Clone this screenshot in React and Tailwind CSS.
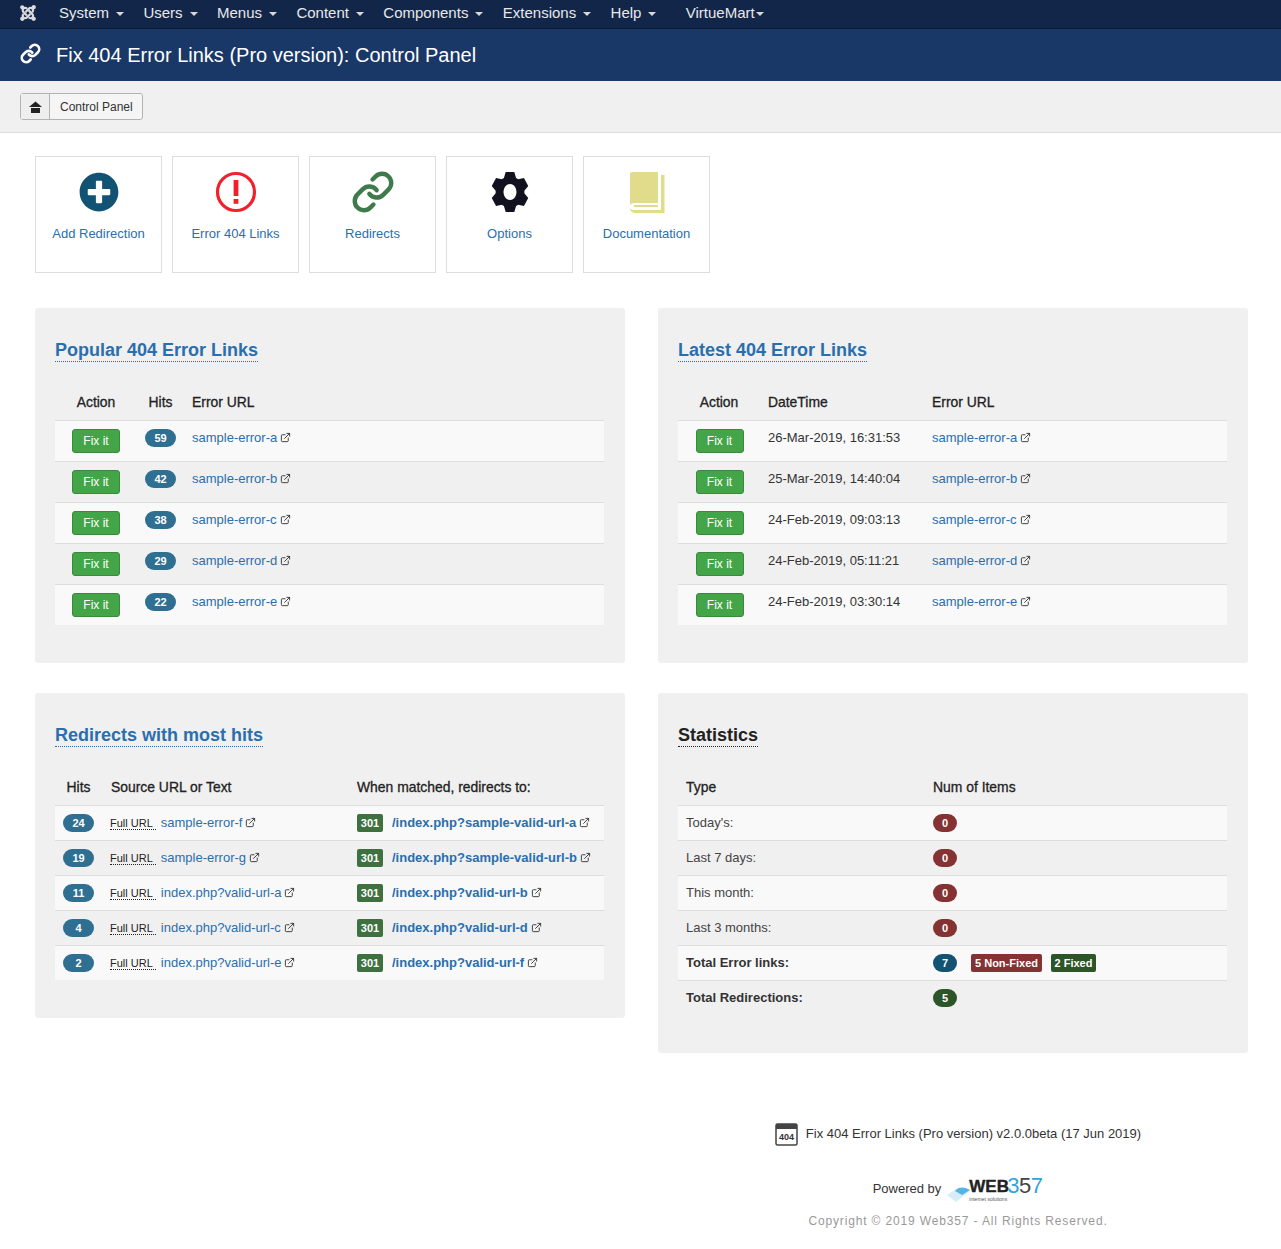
import * as React from 'react'
import { FaJoomla, FaPlusCircle } from 'react-icons/fa'
import { ExternalLink, Link as LinkIcon } from 'lucide-react'

const menu = ['System', 'Users', 'Menus', 'Content', 'Components', 'Extensions', 'Help']

const popular = [
  ['59', 'sample-error-a'],
  ['42', 'sample-error-b'],
  ['38', 'sample-error-c'],
  ['29', 'sample-error-d'],
  ['22', 'sample-error-e'],
]

const latest = [
  ['26-Mar-2019, 16:31:53', 'sample-error-a'],
  ['25-Mar-2019, 14:40:04', 'sample-error-b'],
  ['24-Feb-2019, 09:03:13', 'sample-error-c'],
  ['24-Feb-2019, 05:11:21', 'sample-error-d'],
  ['24-Feb-2019, 03:30:14', 'sample-error-e'],
]

const redirects = [
  ['24', 'sample-error-f', '/index.php?sample-valid-url-a'],
  ['19', 'sample-error-g', '/index.php?sample-valid-url-b'],
  ['11', 'index.php?valid-url-a', '/index.php?valid-url-b'],
  ['4', 'index.php?valid-url-c', '/index.php?valid-url-d'],
  ['2', 'index.php?valid-url-e', '/index.php?valid-url-f'],
]

const stats = ["Today's:", 'Last 7 days:', 'This month:', 'Last 3 months:']

function gearPath() {
  const pts = []
  for (let k = 0; k < 6; k++) {
    const a = -90 + k * 60
    const steps = [[-25, 15.5], [-13, 20.5], [13, 20.5], [25, 15.5]]
    steps.forEach(([d, r]) => {
      const t = ((a + d) * Math.PI) / 180
      pts.push(`${(19 + r * 0.93 * Math.cos(t)).toFixed(2)} ${(21 + r * Math.sin(t)).toFixed(2)}`)
    })
  }
  return `M${pts.join('L')}zM19 13a6.500 8 0 1 0 .01 0z`
}

function Ext() {
  return <ExternalLink className="inline-block ml-[3px] text-[#333] align-[-1px]" size={11} strokeWidth={2} />
}

function Pill({ children, color = 'bg-[#2f6f91]', w = 'w-[31px]' }) {
  return (
    <span className={`inline-flex items-center justify-center h-[18px] rounded-[9px] text-white text-[11px] font-bold ${color} ${w}`}>
      {children}
    </span>
  )
}

function FixIt() {
  return (
    <span className="inline-flex items-center justify-center w-[48px] h-[24px] rounded-[3px] bg-[#43a547] border border-[#3a8a3e] text-white text-[12px]">
      Fix it
    </span>
  )
}

function Panel({ title, link = true, className = '', children }) {
  return (
    <div className={`bg-[#f0f0f0] rounded-[3px] pl-[20px] pr-[21px] pt-[30px] ${className}`}>
      <h3 className="h-[47px] text-[18px] leading-[24px] font-bold">
        <span className={`border-b border-dotted pb-[1px] ${link ? 'text-[#2a6ead] border-[#2a6ead]' : 'text-[#222] border-[#222]'}`}>
          {title}
        </span>
      </h3>
      {children}
    </div>
  )
}

function Th({ className = 'text-left', children }) {
  return <th className={`h-[35px] pt-[1px] font-normal text-[#222] text-[13.9px] [-webkit-text-stroke:0.3px_#222] ${className}`}>{children}</th>
}

function rowClass(i, h) {
  return `${h} border-t border-[#dddddd] ${i % 2 === 0 ? 'bg-[#f9f9f9]' : ''}`
}

function PlusIcon() {
  return <FaPlusCircle className="text-[#125373] w-[40px] h-[40px]" />
}

function AlertIcon() {
  return (
    <svg width="42" height="42" viewBox="0 0 42 42">
      <circle cx="21" cy="21" r="18.5" fill="none" stroke="#f0212b" strokeWidth="3.2" />
      <rect x="18.6" y="9" width="4.8" height="16" fill="#f0212b" />
      <rect x="18.6" y="28" width="4.8" height="4.8" fill="#f0212b" />
    </svg>
  )
}

function GearIcon() {
  return (
    <svg width="38" height="42" viewBox="0 0 38 42">
      <path fill="#11111f" fillRule="evenodd" d={gearPath()} />
    </svg>
  )
}

function BookIcon() {
  return (
    <svg width="36" height="42" viewBox="0 0 36 42">
      <path fill="#e0dc8c" d="M3 1h26v31H5a5 5 0 0 0-4 2V3a2 2 0 0 1 2-2z" />
      <path fill="#e0dc8c" d="M32 4h3.500v38H6a5 5 0 0 1-5-5 4 4 0 0 0 4 2h27z" />
      <rect x="5" y="34" width="24" height="2" fill="#e0dc8c" />
    </svg>
  )
}

function HomeIcon() {
  return (
    <svg width="13" height="12" viewBox="0 0 13 12">
      <path fill="#222" d="M6.500 0.500 13 6H0z" />
      <path fill="#222" d="M2 7h9v5H2z" />
    </svg>
  )
}

function Card({ icon, label }) {
  return (
    <a className="flex flex-col items-center w-[127px] h-[117px] border border-[#dddddd] bg-white text-[#2a6ead] text-[13px]">
      <div className="h-[42px] mt-[14px] flex items-center justify-center">{icon}</div>
      <span className="mt-[11px] leading-[20px]">{label}</span>
    </a>
  )
}

function Web357Logo() {
  return (
    <span className="inline-flex items-center ml-[5px] relative h-[28px] w-[97px]">
      <svg width="26" height="20" viewBox="0 0 26 20" className="absolute left-0 top-[8px]">
        <path d="M1 12 L12 5 L24 8 L10 19z" fill="#d6edf8" />
        <path d="M9 8 C13 3 19 4 24 7 L16 12z" fill="#54b4e4" />
      </svg>
      <span className="absolute left-[23px] top-[2px] text-[#222] text-[17px] leading-[20px] font-bold [-webkit-text-stroke:0.4px_#222]">WEB</span>
      <span className="absolute left-[61px] top-[-1px] text-[22px] leading-[24px] tracking-[-0.5px] font-light">
        <span className="text-[#2ea5e0]">3</span>
        <span className="text-[#444]">5</span>
        <span className="text-[#2ea5e0]">7</span>
      </span>
      <span className="absolute left-[23px] top-[21px] text-[#555] text-[5px] leading-[6px]">internet solutions</span>
    </span>
  )
}

export default function App() {
  return (
    <div className="min-h-[1249px] bg-white text-[13px] text-[#333] font-['Liberation_Sans',Arial,sans-serif]">
      <div className="h-[29px] bg-[#12264a] border-b border-[#0c1a33] flex items-center text-[#e8e8e8] text-[15px] pb-[2px]">
        <FaJoomla className="ml-[19px] mr-[22px] w-[18px] h-[18px] text-[#dcdcdc]" />
        {menu.map((m) => (
          <span key={m} className="flex items-center mr-[19.4px]">
            {m}
            <span className="ml-[7px] mt-[1px] border-x-[4px] border-x-transparent border-t-[4px] border-t-[#d8d8d8]" />
          </span>
        ))}
        <span className="flex items-center ml-[10px]">
          VirtueMart
          <span className="ml-[1px] mt-[1px] border-x-[4px] border-x-transparent border-t-[4px] border-t-[#d8d8d8]" />
        </span>
      </div>

      <div className="h-[52px] bg-[#1a3867] flex items-center text-white">
        <LinkIcon className="ml-[20px] w-[21px] h-[21px] mb-[3px]" strokeWidth={3} />
        <h1 className="ml-[15px] text-[20px] leading-[26px] mb-[1px]">Fix 404 Error Links (Pro version): Control Panel</h1>
      </div>

      <div className="h-[52px] bg-[#f0f0f0] border-b border-[#dddddd] flex items-center pl-[20px]">
        <div className="flex h-[27px] border border-[#b3b3b3] rounded-[3px] bg-[#f5f5f5] text-[12px] text-[#333]">
          <span className="w-[29px] flex items-center justify-center border-r border-[#b3b3b3] bg-[#eeeeee]">
            <HomeIcon />
          </span>
          <span className="flex items-center pl-[10px] pr-[9px]">Control Panel</span>
        </div>
      </div>

      <div className="pl-[35px] pr-[33px] pt-[23px]">
        <div className="flex gap-[10px]">
          <Card icon={<PlusIcon />} label="Add Redirection" />
          <Card icon={<AlertIcon />} label="Error 404 Links" />
          <Card icon={<LinkIcon className="w-[44px] h-[44px] text-[#3e7a4c]" strokeWidth={2.4} />} label="Redirects" />
          <Card icon={<GearIcon />} label="Options" />
          <Card icon={<BookIcon />} label="Documentation" />
        </div>

        <div className="grid grid-cols-2 gap-x-[33px] gap-y-[30px] mt-[35px] items-start">
          <Panel title="Popular 404 Error Links" className="h-[355px]">
            <table className="w-full border-collapse">
              <thead>
                <tr>
                  <Th className="w-[82px] text-center">Action</Th>
                  <Th className="w-[55px] text-center pr-[8px]">Hits</Th>
                  <Th>Error URL</Th>
                </tr>
              </thead>
              <tbody>
                {popular.map(([hits, url], i) => (
                  <tr key={url} className={rowClass(i, 'h-[41px]')}>
                    <td className="text-center"><FixIt /></td>
                    <td className="text-center align-top pt-[7px] pr-[8px]"><Pill>{hits}</Pill></td>
                    <td className="align-top pt-[8px] text-[#2a6ead] leading-[18px]">{url}<Ext /></td>
                  </tr>
                ))}
              </tbody>
            </table>
          </Panel>

          <Panel title="Latest 404 Error Links" className="h-[355px]">
            <table className="w-full border-collapse">
              <thead>
                <tr>
                  <Th className="w-[82px] text-center">Action</Th>
                  <Th className="w-[172px] pl-[8px] text-left">DateTime</Th>
                  <Th>Error URL</Th>
                </tr>
              </thead>
              <tbody>
                {latest.map(([date, url], i) => (
                  <tr key={url} className={rowClass(i, 'h-[41px]')}>
                    <td className="text-center pl-[1px]"><FixIt /></td>
                    <td className="align-top pt-[8px] pl-[8px] leading-[18px]">{date}</td>
                    <td className="align-top pt-[8px] text-[#2a6ead] leading-[18px]">{url}<Ext /></td>
                  </tr>
                ))}
              </tbody>
            </table>
          </Panel>

          <Panel title="Redirects with most hits" className="h-[325px]">
            <table className="w-full border-collapse table-fixed">
              <thead>
                <tr>
                  <Th className="w-[47px] text-center">Hits</Th>
                  <Th className="w-[255px] pl-[9px] text-left">Source URL or Text</Th>
                  <Th>When matched, redirects to:</Th>
                </tr>
              </thead>
              <tbody>
                {redirects.map(([hits, src, dest], i) => (
                  <tr key={src} className={rowClass(i, 'h-[35px]')}>
                    <td className="text-center"><Pill>{hits}</Pill></td>
                    <td className="pl-[8px] whitespace-nowrap">
                      <span className="text-[11px] text-[#222] border-b border-dotted border-[#222] pr-[3px]">Full URL</span>
                      <span className="text-[#2a6ead] ml-[5px]">{src}</span>
                      <Ext />
                    </td>
                    <td className="whitespace-nowrap">
                      <span className="inline-flex items-center justify-center w-[26px] h-[18px] rounded-[2px] bg-[#3e7040] text-white text-[11px] font-bold">301</span>
                      <span className="ml-[9px] text-[#2a6ead] font-bold">{dest}</span>
                      <Ext />
                    </td>
                  </tr>
                ))}
              </tbody>
            </table>
          </Panel>

          <Panel title="Statistics" link={false} className="h-[360px]">
            <table className="w-full border-collapse table-fixed">
              <thead>
                <tr>
                  <Th className="w-[255px] pl-[8px] text-left">Type</Th>
                  <Th>Num of Items</Th>
                </tr>
              </thead>
              <tbody>
                {stats.map((s, i) => (
                  <tr key={s} className={rowClass(i, 'h-[35px]')}>
                    <td className="pl-[8px] text-[#444]">{s}</td>
                    <td><Pill color="bg-[#843232]" w="w-[24px]">0</Pill></td>
                  </tr>
                ))}
                <tr className={rowClass(4, 'h-[35px]')}>
                  <td className="pl-[8px] font-bold text-[#333]">Total Error links:</td>
                  <td>
                    <Pill color="bg-[#125373]" w="w-[24px]">7</Pill>
                    <span className="inline-flex items-center justify-center ml-[14px] w-[71px] h-[18px] rounded-[2px] bg-[#843232] text-white text-[11px] font-bold">5 Non-Fixed</span>
                    <span className="inline-flex items-center justify-center ml-[9px] w-[45px] h-[18px] rounded-[2px] bg-[#2c5528] text-white text-[11px] font-bold">2 Fixed</span>
                  </td>
                </tr>
                <tr className={rowClass(5, 'h-[35px]')}>
                  <td className="pl-[8px] font-bold text-[#333]">Total Redirections:</td>
                  <td><Pill color="bg-[#2c5528]" w="w-[24px]">5</Pill></td>
                </tr>
              </tbody>
            </table>
          </Panel>

          <div />
          <div className="mt-[38px] pl-[10px] flex flex-col items-center text-[#333]">
            <div className="flex items-center h-[26px]">
              <svg width="23" height="23" viewBox="0 0 23 23" className="mr-[8px]">
                <rect x="1" y="1" width="21" height="21" rx="1.500" fill="#fff" stroke="#444" strokeWidth="1.500" />
                <rect x="1" y="1" width="21" height="5" fill="#444" />
                <text x="11.500" y="17" textAnchor="middle" fontSize="9" fontWeight="bold" fill="#333" fontFamily="Liberation Sans">404</text>
              </svg>
              Fix 404 Error Links (Pro version) v2.0.0beta (17 Jun 2019)
            </div>
            <div className="flex items-center h-[28px] mt-[28px]">
              Powered by
              <Web357Logo />
            </div>
            <div className="mt-[9px] text-[12px] text-[#999] tracking-[0.85px]">Copyright © 2019 Web357 - All Rights Reserved.</div>
          </div>
        </div>
      </div>
    </div>
  )
}
